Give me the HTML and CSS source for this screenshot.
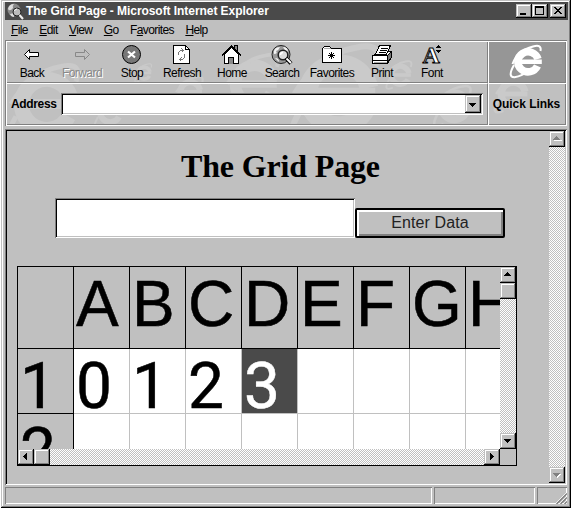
FILE: index.html
```html
<!DOCTYPE html>
<html lang="en">
<head>
<meta charset="utf-8">
<title>The Grid Page - Microsoft Internet Explorer</title>
<link rel="stylesheet" href="styles.css">
</head>
<body>
<div class="window">
  <header class="titlebar">
    <svg class="app-icon" width="17" height="17" viewBox="0 0 17 17"><circle cx="7" cy="7" r="6.500" fill="#888"/><path d="M1 6Q2 1 7 1Q5 3 6 5Q3 9 1 6M3 11Q7 9 7 14Q4 14 3 11" fill="#ddd"/><circle cx="10" cy="9" r="4" fill="#bbb" stroke="#222"/><path d="M7.500 8Q8 6 10 6" stroke="#fff" fill="none"/><path d="M12.500 12L16 16" stroke="#eee" stroke-width="2"/></svg>
    <span class="title-text">The Grid Page - Microsoft Internet Explorer</span>
    <div class="controls">
      <button class="btn"><svg width="16" height="14" shape-rendering="crispEdges"><path d="M4 9h6v2H4z"/></svg></button>
      <button class="btn"><svg width="16" height="14" shape-rendering="crispEdges"><path d="M3 2h9v9H3zM4 4v6h7V4z" fill-rule="evenodd"/></svg></button>
      <button class="btn close"><svg width="16" height="14" shape-rendering="crispEdges"><path d="M4 3h2v1h1v1h2V4h1V3h2v1h-1v1h-1v1H9v1h1v1h1v1h1v1h-2V9H9V8H7v1H6v1H4V9h1V8h1V7h1V6H6V5H5V4H4z"/></svg></button>
    </div>
  </header>
  <nav class="menu">
    <span><u>F</u>ile</span><span><u>E</u>dit</span><span><u>V</u>iew</span><span><u>G</u>o</span><span>F<u>a</u>vorites</span><span><u>H</u>elp</span>
  </nav>
  <section class="bars">
    <svg class="watermark" width="559" height="82" viewBox="7 42 559 82">
      <defs>
        <g id="e"><path d="M9 5A10 10 0 1 1 10 -2" fill="none" stroke-width="6"/><path d="M-9 0H12" stroke-width="4"/><path d="M-12 5Q-20 19 -8 14M-14 0Q-6 -13 6 -15Q15 -17 12 -9" fill="none" stroke-width="2"/></g>
      </defs>
      <g stroke="#cacaca">
        <use href="#e" transform="translate(46 104) scale(2.500)"/>
        <use href="#e" transform="translate(144 73) scale(.6)"/>
        <use href="#e" transform="translate(110 112) scale(1)"/>
        <use href="#e" transform="translate(190 92) scale(1)"/>
        <use href="#e" transform="translate(254 84) scale(1.900)"/>
        <use href="#e" transform="translate(338 94) scale(3.100)"/>
        <use href="#e" transform="translate(400 75) scale(.9)"/>
        <use href="#e" transform="translate(454 106) scale(1.300)"/>
        <use href="#e" transform="translate(513 94) scale(1.200)"/>
      </g>
    </svg>
    <div class="tools">
      <div class="tool"><svg viewBox="0 0 50 26"><path d="M17.500 12.500L22.500 7.500V10.500H31.500V14.500H22.500V17.500Z" fill="#fff" stroke="#000"/></svg><span>Back</span></div>
      <div class="tool off"><svg viewBox="0 0 50 26"><path d="M32.500 12.500L27.500 7.500V10.500H18.500V14.500H27.500V17.500Z" fill="none" stroke="#888"/></svg><span>Forward</span></div>
      <div class="tool"><svg viewBox="0 0 50 26"><circle cx="24.500" cy="12.500" r="9" fill="#777" stroke="#000"/><path d="M21 9.500l7 6M28 9.500l-7 6" stroke="#fff" stroke-width="2.200"/></svg><span>Stop</span></div>
      <div class="tool"><svg viewBox="0 0 50 26" shape-rendering="crispEdges"><path d="M16.500 3.500H28.500L32.500 7.500V21.500H16.500Z" fill="#fff" stroke="#000"/><path d="M28.500 3.500V7.500H32.500" fill="none" stroke="#000"/><path d="M21.500 13V10.500L23.500 8.500H26M24.500 6.500L26.500 8.500L24.500 10.500M27.500 12V15.500L25.500 17.500H23M24.500 15.500L22.500 17.500L24.500 19.500" fill="none" stroke="#777"/></svg><span>Refresh</span></div>
      <div class="tool"><svg viewBox="0 0 50 26" shape-rendering="crispEdges"><path d="M27.500 8V3.500H30.500V11" fill="#888" stroke="#000"/><path d="M17.500 12.500V21.500H31.500V12.500L24.500 5.500Z" fill="#fff" stroke="#000"/><path d="M15 13.500L24.500 4L34 13.500" fill="none" stroke="#000" stroke-width="1.400"/><path d="M21.500 21.500V15.500H26.500V21.500" fill="#888" stroke="#000"/></svg><span>Home</span></div>
      <div class="tool"><svg viewBox="0 0 50 26"><circle cx="24" cy="12.500" r="9" fill="#999" stroke="#222"/><path d="M17 12Q16 5 23 5Q22 8 19 9Q21 12 17 12M26 5Q31 5 31 10L28 8M18 16Q22 16 22 20" fill="#f2f2f2"/><circle cx="26" cy="13" r="4.800" fill="#ddd" stroke="#222" stroke-width="1.500"/><path d="M23.500 13Q23.500 10.500 26 10.500" fill="none" stroke="#fff" stroke-width="1.500"/><path d="M29 16L34 21.500" stroke="#000" stroke-width="4"/><path d="M29.500 16.500L34 21" stroke="#fff" stroke-width="2"/></svg><span>Search</span></div>
      <div class="tool"><svg viewBox="0 0 50 26" shape-rendering="crispEdges"><path d="M15.500 20.500V6.500L17.500 4.500H22.500L24.500 6.500H34.500V20.500Z" fill="#fff" stroke="#000"/><path d="M17 6.500H24" stroke="#aaa"/><path d="M24.500 10V17M21 13.500H28M22 11L27 16M27 11L22 16" stroke="#000"/></svg><span>Favorites</span></div>
      <div class="tool"><svg viewBox="0 0 50 26" shape-rendering="crispEdges"><path d="M16.500 13.500L20.500 9.500H34.500V15.500L30.500 21.500H15.500V13.500Z" fill="#fff" stroke="#000"/><path d="M18.500 12.500L22.500 3.500H33.500L29.500 12.500Z" fill="#fff" stroke="#000"/><path d="M24 6.500H31M23 8.500H30M22 10.500H29" stroke="#000"/><path d="M30.500 13.500L34.500 9.500V15.500L30.500 20.500Z" fill="#777" stroke="#000"/><path d="M15.500 13.500H30M16 18.500H30" stroke="#000"/><path d="M17 20H30" stroke="#aaa"/></svg><span>Print</span></div>
      <div class="tool"><svg viewBox="0 0 50 26"><text class="font-icon" x="15.500" y="21">A</text><path d="M28 6L31 3L34 6ZM28 8L31 11L34 8Z" shape-rendering="crispEdges"/></svg><span>Font</span></div>
    </div>
    <div class="logo"><svg width="76" height="40" viewBox="489 42 76 40"><path d="M537.500 66A10.300 10 0 1 1 538 59" fill="none" stroke="#fff" stroke-width="7.500"/><path d="M520 59.500H541.800V64H520Z" fill="#fff"/><path d="M514 65Q507 77.500 514.500 77.300Q522 76 530 70M512.500 64Q517 51 533 46.500Q542 44 540.500 51" fill="none" stroke="#fff" stroke-width="2"/></svg></div>
    <div class="address">
      <b>Address</b>
      <div class="field"><button class="btn"><svg width="16" height="17" shape-rendering="crispEdges"><path d="M4 7h7v1h-1v1H9v1H8v1H7v-1H6V9H5V8H4z"/></svg></button></div>
    </div>
    <div class="links"><b>Quick Links</b></div>
  </section>
  <main class="view">
    <div class="page">
      <h1>The Grid Page</h1>
      <div class="form"><div class="entry"></div><button class="submit"><span>Enter Data</span></button></div>
      <div class="grid-box">
        <div class="grid">
          <div class="h"></div><div class="h">A</div><div class="h">B</div><div class="h">C</div><div class="h">D</div><div class="h">E</div><div class="h">F</div><div class="h">G</div><div class="h">H</div>
          <div class="r">1</div><div>0</div><div>1</div><div>2</div><div class="sel">3</div><div></div><div></div><div></div><div></div>
          <div class="r">2</div><div></div><div></div><div></div><div></div><div></div><div></div><div></div><div></div>
        </div>
        <div class="vscroll">
          <button class="btn"><svg width="16" height="16" shape-rendering="crispEdges"><path d="M4 9V8h1V7h1V6h1V5h1v1h1v1h1v1h1v1z"/></svg></button>
          <button class="btn"></button>
          <button class="btn last"><svg width="16" height="16" shape-rendering="crispEdges"><path d="M4 6h7v1h-1v1H9v1H8v1H7V9H6V8H5V7H4z"/></svg></button>
        </div>
        <div class="hscroll">
          <button class="btn"><svg width="16" height="16" shape-rendering="crispEdges"><path d="M9 4v7H8v-1H7V9H6V8H5V7h1V6h1V5h1V4z"/></svg></button>
          <button class="btn"></button>
          <button class="btn last"><svg width="16" height="16" shape-rendering="crispEdges"><path d="M6 4v7h1v-1h1V9h1V8h1V7H9V6H8V5H7V4z"/></svg></button>
        </div>
      </div>
    </div>
    <div class="page-scroll">
      <button class="btn"><svg width="16" height="16" shape-rendering="crispEdges"><path d="M5 10h8V9H5z" fill="#fff"/><path d="M4 9V8h1V7h1V6h1V5h1v1h1v1h1v1h1v1z" fill="#808080"/></svg></button>
      <button class="btn last"><svg width="16" height="16" shape-rendering="crispEdges"><path d="M5 7h7v1h-1v1h-1v1H9v1H8v-1H7z" fill="#fff"/><path d="M4 6h7v1h-1v1H9v1H8v1H7V9H6V8H5V7H4z" fill="#808080"/></svg></button>
    </div>
  </main>
  <footer class="status">
    <div></div><div></div>
    <div><svg width="12" height="12" viewBox="0 0 12 12"><path d="M0 12L12 0M4 12L12 4M8 12L12 8" stroke="#fff"/><path d="M1.500 12L12 1.500M5.500 12L12 5.500M9.500 12L12 9.500" stroke="#808080" stroke-width="1.500"/></svg></div>
  </footer>
</div>
</body>
</html>
```
FILE: styles.css
```css
* { box-sizing: border-box; }
body { margin: 0; background: #fff; overflow: hidden; font: 12px/14px "Liberation Sans", Arial, sans-serif; color: #000; }
svg { display: block; }
button { border: 0; padding: 0; margin: 0; font: inherit; color: inherit; }
.window { width: 570px; height: 508px; margin-left: 1px; padding: 2px 3px 0 4px; background: #c0c0c0; box-shadow: inset -1px -1px #000, inset 1px 1px #c0c0c0, inset -2px -2px #808080, inset 2px 2px #fff; }
.btn { display: block; width: 16px; height: 16px; background: #c0c0c0; box-shadow: inset -1px -1px #000, inset 1px 1px #c0c0c0, inset -2px -2px #808080, inset 2px 2px #fff; flex: none; }
.titlebar { height: 18px; display: flex; align-items: center; background: #4a4a4a; color: #fff; padding: 0 2px; }
.app-icon { margin-right: 2px; }
.title-text { font-weight: bold; letter-spacing: -0.06px; white-space: nowrap; }
.controls { display: flex; margin-left: auto; }
.controls .btn { height: 14px; }
.controls .close { margin-left: 2px; }
.menu { height: 20px; display: flex; gap: 11.4px; padding: 3px 6px; letter-spacing: -0.6px; }
.bars { position: relative; width: 562px; height: 86px; display: grid; grid-template-columns: 482px 78px; grid-template-rows: 42px 42px; padding: 1px; box-shadow: inset 1px 1px #808080, inset -1px -1px #fff, inset 2px 2px #fff, inset -2px -2px #808080; }
.watermark { position: absolute; left: 2px; top: 2px; }
.tools, .logo, .address, .links { position: relative; margin: 0 0 0 1px; border-bottom: 1px solid #808080; }
.tools, .address { border-right: 1px solid #808080; }
.tools, .logo { margin-top: 1px; }
.tools { display: grid; grid-template-columns: repeat(9, 50px); }
.tool { text-align: center; letter-spacing: -0.55px; line-height: 10px; }
.tool svg { width: 50px; height: 26px; }
.off { color: #888; text-shadow: 1px 1px #fff; }
.font-icon { font: bold 24px "Liberation Serif", serif; fill: #fff; stroke: #000; stroke-width: 1px; }
.logo { background: #969696; margin-right: 1px; }
.address, .links { border-top: 1px solid #fff; display: flex; align-items: center; font-weight: bold; }
.logo, .links { box-shadow: -1px 0 #fff; }
.address { padding-left: 4px; }
.address b { width: 50px; letter-spacing: -0.35px; }
.links { justify-content: center; letter-spacing: -0.05px; padding-right: 2px; }
.field { width: 422px; height: 22px; background: #fff; padding: 2px; display: flex; justify-content: flex-end; box-shadow: inset 1px 1px #808080, inset -1px -1px #fff, inset 2px 2px #000, inset -2px -2px #c0c0c0; }
.field .btn { height: 18px; }
.view { width: 562px; height: 356px; margin-top: 3px; display: flex; padding: 2px; box-shadow: inset 1px 1px #808080, inset -1px -1px #fff, inset 2px 2px #000, inset -2px -1px #c0c0c0; }
.page { width: 542px; padding: 17px 0 0 10px; }
h1 { margin: 0 0 14px 164px; font: bold 32px/36px "Liberation Serif", "Times New Roman", serif; letter-spacing: -0.15px; white-space: nowrap; }
.form { display: flex; align-items: flex-end; margin-left: 38px; }
.entry { width: 300px; height: 40px; background: #fff; box-shadow: inset 1px 1px #808080, inset -1px -1px #fff, inset 2px 2px #000, inset -2px -2px #c0c0c0; }
.submit { width: 150px; height: 30px; background: #c0c0c0; border: 2px solid #000; border-radius: 2px; box-shadow: inset 2px 2px #fff, inset -2px -2px #808080; font-size: 16px; letter-spacing: 0.1px; color: #222; }
.grid-box { width: 500px; height: 200px; margin-top: 28px; border: 1px solid #000; display: grid; grid-template-columns: 482px 16px; grid-template-rows: 182px 16px; }
.grid { overflow: hidden; display: grid; grid-template-columns: repeat(9, 56px); grid-template-rows: 82px 65px 65px; background: #fff; font: 64px/64px Roboto, "Liberation Sans", sans-serif; }
.grid > div { padding: 6px 0 0 2px; border-right: 1px solid #c0c0c0; border-bottom: 1px solid #c0c0c0; line-height: 64px; height: 100%; min-height: 0; -webkit-text-stroke: 0.5px currentColor; }
.grid > .h { background: #c0c0c0; border-color: #000; padding: 5px 0 0 2px; font-family: "Liberation Sans", Arial, sans-serif; }
.grid > .r { background: #c0c0c0; border-color: #000; }
.grid > .sel { background: #4a4a4a; color: #fff; }
.vscroll, .hscroll, .page-scroll { display: flex; background: repeating-conic-gradient(#fff 0 25%, #c0c0c0 0 50%) 0 0 / 2px 2px; }
.vscroll, .page-scroll { flex-direction: column; }
.last { margin-top: auto; }
.hscroll .last { margin: 0 0 0 auto; }
.page-scroll { width: 16px; }
.status { width: 563px; height: 17px; margin-top: 2px; display: grid; grid-template-columns: 427px 101px 30px; gap: 2px; }
.status div { box-shadow: inset 1px 1px #808080, inset -1px -1px #fff; display: flex; align-items: flex-end; justify-content: flex-end; }
```
